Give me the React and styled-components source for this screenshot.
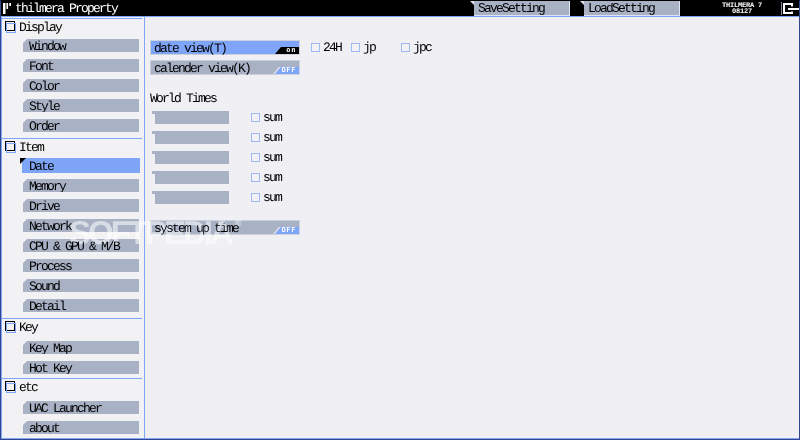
import React from "react";
import styled, { createGlobalStyle } from "styled-components";

const BLUE = "#7fa5f8";
const SLATE = "#a9b2c5";
const PAPER = "#f0f0f4";
const MONO = `"Liberation Mono", monospace`;

const Global = createGlobalStyle`
  html, body { margin: 0; padding: 0; background: ${PAPER}; }
  #root { width: 800px; height: 440px; overflow: hidden; }
`;

const Frame = styled.div`
  position: relative;
  box-sizing: border-box;
  width: 800px;
  height: 440px;
  display: flex;
  flex-direction: column;
  border: 1px solid #33458f;
  border-top-color: #000;
  background: ${PAPER};
  color: #000;
  font: 13px/14px ${MONO};
  letter-spacing: -1.8px;
  text-rendering: geometricPrecision;
  overflow: hidden;
`;

const TitleBar = styled.header`
  flex: none;
  height: 15px;
  display: flex;
  align-items: stretch;
  background: #000;
  color: #fff;
`;

const Logo = styled.svg`
  flex: none;
  width: 8px;
  height: 11px;
  margin: 2px 4px 0 2px;
`;

const AppTitle = styled.div`
  flex: 1;
  line-height: 16px;
`;

const Tab = styled.button`
  appearance: none;
  box-sizing: border-box;
  width: 100px;
  height: 15px;
  margin: 0 10px 0 0;
  padding: 1px 0 0 8px;
  border: 0;
  border-right: 1px solid #dfe4f2;
  border-bottom: 1px solid #dfe4f2;
  background: linear-gradient(to right, #dfe4f2 4px, ${SLATE} 4px);
  color: #000;
  font: inherit;
  letter-spacing: inherit;
  text-align: left;
  clip-path: polygon(0 0, 100% 0, 100% 100%, 4px 100%, 4px 4px);
`;

const Info = styled.div`
  width: 44px;
  margin: 2px 0 0 30px;
  font: bold 7px/6px ${MONO};
  letter-spacing: -0.2px;
  text-align: center;
  white-space: pre;
`;

const ExitIcon = styled.svg`
  flex: none;
  width: 18px;
  height: 15px;
  margin-left: 17px;
`;

const Body = styled.div`
  flex: 1;
  min-height: 0;
  display: flex;
  border-top: 1px solid ${BLUE};
  border-left: 1px solid ${BLUE};
  border-bottom: 1px solid ${BLUE};
`;

const Sidebar = styled.nav`
  flex: none;
  box-sizing: border-box;
  width: 143px;
  padding: 1px 2px 0 0;
  border-right: 1px solid ${BLUE};
  background: #f2f2f4;
`;

const Group = styled.section`
  border-top: 1px solid ${BLUE};
  padding-bottom: ${(p) => (p.$tall ? "4px" : "6px")};
`;

const GroupHead = styled.div`
  height: ${(p) => (p.$tall ? "22px" : "20px")};
  display: flex;
  align-items: flex-start;
  padding-left: 3px;
`;

const GroupMark = styled.span`
  position: relative;
  flex: none;
  box-sizing: border-box;
  width: 10px;
  height: 10px;
  margin: 2px 4px 0 0;
  border: 1px solid #000;
  &::after {
    content: "";
    position: absolute;
    left: 0;
    top: 1px;
    box-sizing: border-box;
    width: 10px;
    height: 10px;
    border: 1px solid ${BLUE};
  }
`;

const GroupTitle = styled.span`
  line-height: 17px;
`;

const ItemList = styled.ul`
  list-style: none;
  margin: 0 0 0 21px;
  padding: 0;
  width: 116px;
  display: flex;
  flex-direction: column;
  gap: 7px;
`;

const Item = styled.li`
  position: relative;
  box-sizing: border-box;
  height: ${(p) => (p.$active ? "15px" : "13px")};
  margin: ${(p) => (p.$active ? "-1px -1px" : "0")};
  padding-left: ${(p) => (p.$active ? "7px" : "6px")};
  background: ${(p) => (p.$active ? BLUE : SLATE)};
  line-height: ${(p) => (p.$active ? "17px" : "15px")};
  clip-path: ${(p) =>
    p.$active
      ? "none"
      : "polygon(4px 0, 100% 0, 100% 100%, 0 100%, 0 4px)"};
  ${(p) =>
    p.$active &&
    `&::before {
      content: "";
      position: absolute;
      left: -2px;
      top: 0;
      width: 6px;
      height: 6px;
      background: #000;
      clip-path: polygon(0 0, 100% 0, 0 100%);
    }`}
`;

const Main = styled.main`
  flex: 1;
  padding: 23px 0 0 5px;
  display: flex;
  flex-direction: column;
  align-items: flex-start;
`;

const ToggleRow = styled.div`
  display: flex;
  align-items: center;
  margin-top: ${(p) => p.$top || 0}px;
  margin-bottom: 5px;
`;

const Toggle = styled.div`
  position: relative;
  box-sizing: border-box;
  width: 150px;
  height: 15px;
  padding-left: 3px;
  border: 1px solid #ccd1de;
  background: ${(p) => (p.$on ? BLUE : SLATE)};
  line-height: 15px;
`;

const Badge = styled.span`
  position: absolute;
  right: 0;
  bottom: 0;
  box-sizing: border-box;
  width: 24px;
  height: 7px;
  padding-right: 3px;
  background: ${(p) => (p.$on ? "#000" : BLUE)};
  color: #fff;
  font: bold 7px/7px "DejaVu Sans Mono", monospace;
  letter-spacing: 0.6px;
  text-align: right;
  clip-path: polygon(6px 0, 100% 0, 100% 100%, 0 100%);
`;

const OffSlash = styled.span`
  position: absolute;
  right: 0;
  bottom: 0;
  width: 26px;
  height: 7px;
  background: #dfe4f2;
  clip-path: polygon(6px 0, 8px 0, 2px 100%, 0 100%);
`;

const Check = styled.label`
  display: flex;
  align-items: center;
  width: ${(p) => p.$w}px;
  line-height: 15px;
`;

const Box = styled.span`
  flex: none;
  box-sizing: border-box;
  width: 9px;
  height: 9px;
  margin-right: 3px;
  border: 1px solid #9db8f2;
  background: #f2f2f6;
`;

const Options = styled.div`
  display: flex;
  margin-left: 11px;
`;

const SectionTitle = styled.div`
  margin: 10px 0 3px;
  line-height: 18px;
`;

const ZoneRow = styled.div`
  display: flex;
  align-items: center;
  height: 13px;
  margin: 0 0 7px 2px;
`;

const ZoneField = styled.div`
  width: 77px;
  height: 13px;
  margin-right: 22px;
  background: ${SLATE};
  clip-path: polygon(0 0, 100% 0, 100% 100%, 3px 100%, 3px 3px, 0 3px);
`;

const Watermark = styled.div`
  position: absolute;
  left: 68px;
  top: 210px;
  color: #fff;
  font: bold 33px/44px "Liberation Sans", sans-serif;
  letter-spacing: -3px;
  pointer-events: none;
  white-space: nowrap;
  mix-blend-mode: overlay;
  opacity: 0.55;
`;

const WatermarkSign = styled.sup`
  font-size: 9px;
  line-height: 0;
  vertical-align: 18px;
  margin-left: 4px;
`;

const groups = [
  { title: "Display", items: ["Window", "Font", "Color", "Style", "Order"] },
  {
    title: "Item",
    items: ["Date", "Memory", "Drive", "Network", "CPU & GPU & M/B", "Process", "Sound", "Detail"],
  },
  { title: "Key", tall: true, items: ["Key Map", "Hot Key"] },
  { title: "etc", tall: true, items: ["UAC Launcher", "about"] },
];

export default function App() {
  return (
    <>
      <Global />
      <Frame>
        <TitleBar>
          <Logo viewBox="0 0 8 11">
            <path d="M0 0h2.5v11H0zM3.4 0h1.7v6H3.4zM6.3 0H8v3H6.3z" fill="#fff" />
          </Logo>
          <AppTitle>thilmera Property</AppTitle>
          <Tab>SaveSetting</Tab>
          <Tab>LoadSetting</Tab>
          <Info>{"THILMERA 7\n08127"}</Info>
          <ExitIcon viewBox="0 0 18 15">
            <path d="M0.5 1v13" stroke="#8a8fa0" fill="none" />
            <path d="M11 5.5V3H3v9h8v-1.5M7 8h11" stroke="#fff" strokeWidth="2" fill="none" />
          </ExitIcon>
        </TitleBar>
        <Body>
          <Sidebar>
            {groups.map((g) => (
              <Group key={g.title} $tall={g.tall}>
                <GroupHead $tall={g.tall}>
                  <GroupMark />
                  <GroupTitle>{g.title}</GroupTitle>
                </GroupHead>
                <ItemList>
                  {g.items.map((i) => (
                    <Item key={i} $active={i === "Date"}>{i}</Item>
                  ))}
                </ItemList>
              </Group>
            ))}
          </Sidebar>
          <Main>
            <ToggleRow>
              <Toggle $on>
                date view(T)
                <Badge $on>on</Badge>
              </Toggle>
              <Options>
                <Check $w={40}><Box />24H</Check>
                <Check $w={50}><Box />jp</Check>
                <Check $w={40}><Box />jpc</Check>
              </Options>
            </ToggleRow>
            <ToggleRow>
              <Toggle>
                calender view(K)
                <OffSlash />
                <Badge>OFF</Badge>
              </Toggle>
            </ToggleRow>
            <SectionTitle>World Times</SectionTitle>
            {[0, 1, 2, 3, 4].map((n) => (
              <ZoneRow key={n}>
                <ZoneField />
                <Check $w={40}><Box />sum</Check>
              </ZoneRow>
            ))}
            <ToggleRow $top={9}>
              <Toggle>
                system up time
                <OffSlash />
                <Badge>OFF</Badge>
              </Toggle>
            </ToggleRow>
          </Main>
        </Body>
        <Watermark>SOFTPEDIA<WatermarkSign>®</WatermarkSign></Watermark>
      </Frame>
    </>
  );
}
